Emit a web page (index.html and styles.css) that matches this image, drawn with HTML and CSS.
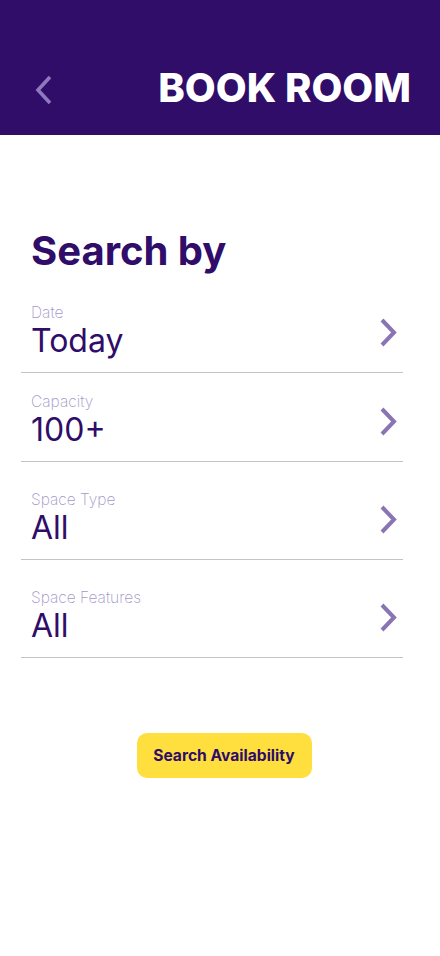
FILE: index.html
```html
<!DOCTYPE html>
<html lang="en">
<head>
<meta charset="utf-8">
<title>Book Room</title>
<link rel="stylesheet" href="styles.css">
</head>
<body>
<header class="topbar">
  <button class="back" aria-label="Back">
    <svg width="18" height="30" viewBox="0 0 18 30"><path d="M15 2 L3 15 L15 28" fill="none" stroke="#8f78bd" stroke-width="3.6"/></svg>
  </button>
  <h1 class="title">BOOK ROOM</h1>
</header>
<main class="content">
  <h2 class="heading">Search by</h2>
  <ul class="filters">
    <li class="filter filter-first">
      <div class="filter-text"><span class="label">Date</span><span class="value">Today</span></div>
      <svg class="chev" width="20" height="30" viewBox="0 0 20 30"><path d="M3 2 L15 14.5 L3 27" fill="none" stroke="#8b74b3" stroke-width="4"/></svg>
    </li>
    <li class="filter filter-tight">
      <div class="filter-text"><span class="label">Capacity</span><span class="value">100+</span></div>
      <svg class="chev" width="20" height="30" viewBox="0 0 20 30"><path d="M3 2 L15 14.5 L3 27" fill="none" stroke="#8b74b3" stroke-width="4"/></svg>
    </li>
    <li class="filter">
      <div class="filter-text"><span class="label">Space Type</span><span class="value">All</span></div>
      <svg class="chev" width="20" height="30" viewBox="0 0 20 30"><path d="M3 2 L15 14.5 L3 27" fill="none" stroke="#8b74b3" stroke-width="4"/></svg>
    </li>
    <li class="filter">
      <div class="filter-text"><span class="label">Space Features</span><span class="value">All</span></div>
      <svg class="chev" width="20" height="30" viewBox="0 0 20 30"><path d="M3 2 L15 14.5 L3 27" fill="none" stroke="#8b74b3" stroke-width="4"/></svg>
    </li>
  </ul>
  <div class="actions">
    <button class="search-btn">Search Availability</button>
  </div>
</main>
</body>
</html>
```
FILE: styles.css
```css
* { box-sizing: border-box; }
html, body { margin: 0; padding: 0; background: #ffffff; }
body { font-family: Inter, "Noto Sans", sans-serif; color: #2f0d68; width: 440px; }

.topbar {
  height: 135px;
  background: #2f0d68;
  display: flex;
  align-items: flex-end;
  justify-content: space-between;
  padding: 0 29px 27px 35px;
}
.back {
  background: none;
  border: 0;
  padding: 0;
  margin: 0 0 3px 0;
  display: flex;
  cursor: pointer;
}
.title {
  margin: 0;
  color: #ffffff;
  font-size: 40px;
  font-weight: 800;
  line-height: 40px;
  letter-spacing: 0;
}

.content { padding: 90px 37px 0 21px; }
.heading {
  margin: 0 0 0 10px;
  font-size: 40px;
  font-weight: 700;
  line-height: 52px;
}
.filters { list-style: none; margin: 0; padding: 0; }
.filter {
  display: flex;
  align-items: center;
  justify-content: space-between;
  border-bottom: 1px solid #c4c4c4;
  padding: 0 4px 12px 10px;
  margin-top: 29px;
}
.filter-first { margin-top: 27px; }
.filter-tight { margin-top: 20px; }
.filter-text { display: flex; flex-direction: column; }
.label {
  font-size: 15.5px;
  font-weight: 200;
  color: #a397c7;
  line-height: 18px;
}
.value {
  font-size: 32px;
  font-weight: 400;
  line-height: 38px;
  color: #2f0d68;
}
.chev { margin-top: 2px; }

.actions { display: flex; justify-content: center; padding: 75px 0 0 24px; }
.search-btn {
  width: 175px;
  height: 45px;
  border: 0;
  border-radius: 10px;
  background: #ffdf3d;
  color: #2f0d68;
  font-family: Inter, "Noto Sans", sans-serif;
  font-size: 15.6px;
  font-weight: 700;
  cursor: pointer;
}
```
